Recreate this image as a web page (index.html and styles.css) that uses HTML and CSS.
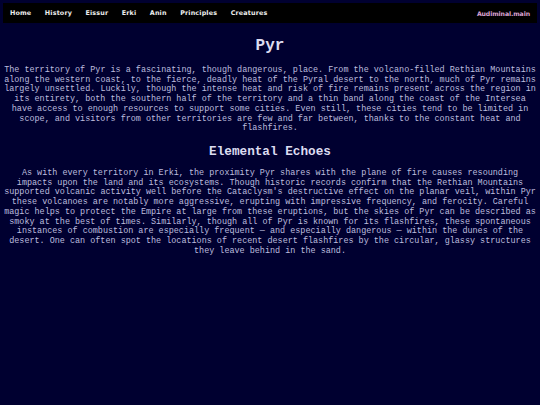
FILE: index.html
```html
<!DOCTYPE html>
<html>
<head>
<meta charset="utf-8">
<link rel="stylesheet" href="styles.css">
</head>
<body>
<nav class="topbar">
  <div class="links">
    <a class="link">Home</a>
    <a class="link">History</a>
    <a class="link">Eissur</a>
    <a class="link">Erki</a>
    <a class="link">Anin</a>
    <a class="link">Principles</a>
    <a class="link">Creatures</a>
  </div>
  <a class="brand">Audiminal.main</a>
</nav>
<main class="content">
  <h1 class="title">Pyr</h1>
  <p class="para">The territory of Pyr is a fascinating, though dangerous, place. From the volcano-filled Rethian Mountains along the western coast, to the fierce, deadly heat of the Pyral desert to the north, much of Pyr remains largely unsettled. Luckily, though the intense heat and risk of fire remains present across the region in its entirety, both the southern half of the territory and a thin band along the coast of the Intersea have access to enough resources to support some cities. Even still, these cities tend to be limited in scope, and visitors from other territories are few and far between, thanks to the constant heat and flashfires.</p>
  <h2 class="subtitle">Elemental Echoes</h2>
  <p class="para">As with every territory in Erki, the proximity Pyr shares with the plane of fire causes resounding impacts upon the land and its ecosystems. Though historic records confirm that the Rethian Mountains supported volcanic activity well before the Cataclysm's destructive effect on the planar veil, within Pyr these volcanoes are notably more aggressive, erupting with impressive frequency, and ferocity. Careful magic helps to protect the Empire at large from these eruptions, but the skies of Pyr can be described as smoky at the best of times. Similarly, though all of Pyr is known for its flashfires, these spontaneous instances of combustion are especially frequent — and especially dangerous — within the dunes of the desert. One can often spot the locations of recent desert flashfires by the circular, glassy structures they leave behind in the sand.</p>
</main>
</body>
</html>
```
FILE: styles.css
```css
html, body {
  margin: 0;
  padding: 0;
  background: #000030;
}
body {
  padding: 3px;
  min-height: 399px;
  color: #bdbddf;
  font-family: "Liberation Mono", "Courier New", monospace;
}
.topbar {
  background: #000000;
  height: 20px;
  display: flex;
  align-items: center;
  justify-content: space-between;
  padding: 0 7px;
  font-family: "DejaVu Sans", sans-serif;
  font-size: 6.4px;
  font-weight: bold;
  letter-spacing: 0.15px;
}
.links {
  display: flex;
  gap: 13.5px;
}
.link {
  color: #eeeeee;
}
.brand {
  color: #dba4d4;
  letter-spacing: -0.1px;
  font-size: 6.2px;
}
.content {
  display: flex;
  flex-direction: column;
  align-items: center;
}
.title {
  margin: 13.5px 0 0;
  font-size: 16px;
  line-height: 19px;
  font-weight: bold;
  color: #dcdcf0;
}
.subtitle {
  margin: 10.5px 0 0;
  font-size: 12.7px;
  line-height: 15px;
  font-weight: bold;
  color: #dcdcf0;
}
.para {
  margin: 10.5px 0 0;
  font-size: 8.45px;
  line-height: 9.7px;
  text-align: center;
  width: 534px;
}
.subtitle + .para {
  margin-top: 9.6px;
}
```
